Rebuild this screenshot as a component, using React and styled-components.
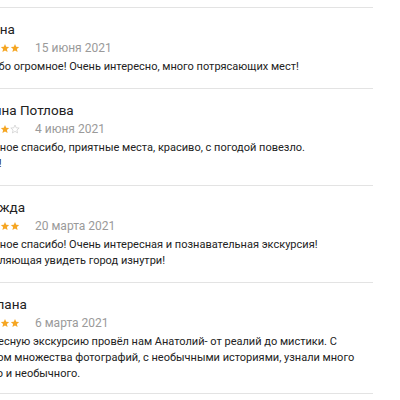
import React from "react"
import styled, { createGlobalStyle } from "styled-components"

const Global = createGlobalStyle`
  body {
    margin: 0;
    background: #fff;
    font-family: Roboto, "Noto Sans", Arial, sans-serif;
    overflow: hidden;
  }
`

const reviews = [
  {
    name: "Полина",
    rating: 5,
    date: "15 июня 2021",
    text: "Спасибо огромное! Очень интересно, много потрясающих мест!",
  },
  {
    name: "Марина Потлова",
    rating: 4,
    date: "4 июня 2021",
    text: "Огромное спасибо, приятные места, красиво, с погодой повезло.\nБраво!",
  },
  {
    name: "Надежда",
    rating: 5,
    date: "20 марта 2021",
    text: "Огромное спасибо! Очень интересная и познавательная экскурсия! Позволяющая увидеть город изнутри!",
  },
  {
    name: "Светлана",
    rating: 5,
    date: "6 марта 2021",
    text: "Интересную экскурсию провёл нам Анатолий- от реалий до мистики. С показом множества фотографий, с необычными историями, узнали много нового и необычного.",
  },
]

const Star = ({ filled }) => (
  <svg width="10" height="10" viewBox="0 0 24 24">
    <path
      d="M12 2.5l2.9 6.6 7.1.6-5.4 4.7 1.6 7-6.2-3.7-6.2 3.7 1.6-7L2 9.7l7.1-.6z"
      fill={filled ? "#f5a623" : "none"}
      stroke={filled ? "#f5a623" : "#c8c8c8"}
      strokeWidth={filled ? 0 : 1.6}
    />
  </svg>
)

const App = () => {
  return (
    <>
      <Global />
      <List>
        {reviews.map((r) => (
          <Review key={r.name}>
            <Name>{r.name}</Name>
            <Meta>
              <Stars>
                {[1, 2, 3, 4, 5].map((i) => (
                  <Star key={i} filled={i <= r.rating} />
                ))}
              </Stars>
              <DateText>{r.date}</DateText>
            </Meta>
            <Text>{r.text}</Text>
          </Review>
        ))}
      </List>
    </>
  )
}

export default App

const List = styled.div`
  margin: 7px 0 0 -33px;
  width: 406px;
`

const Review = styled.div`
  border-top: 1px solid #e3e3e3;
  padding: 12px 0 13px;
  &:last-child {
    border-bottom: 1px solid #e3e3e3;
    padding-bottom: 11px;
  }
`

const Name = styled.div`
  font-size: 13.5px;
  line-height: 19px;
  color: #222;
`

const Meta = styled.div`
  display: flex;
  align-items: center;
  height: 17px;
`

const Stars = styled.div`
  display: flex;
  margin-left: 3px;
`

const DateText = styled.span`
  margin-left: 15px;
  font-size: 12px;
  color: #9a9a9a;
`

const Text = styled.div`
  margin-top: 3px;
  font-size: 11px;
  line-height: 16px;
  color: #222;
  white-space: pre-line;
`
